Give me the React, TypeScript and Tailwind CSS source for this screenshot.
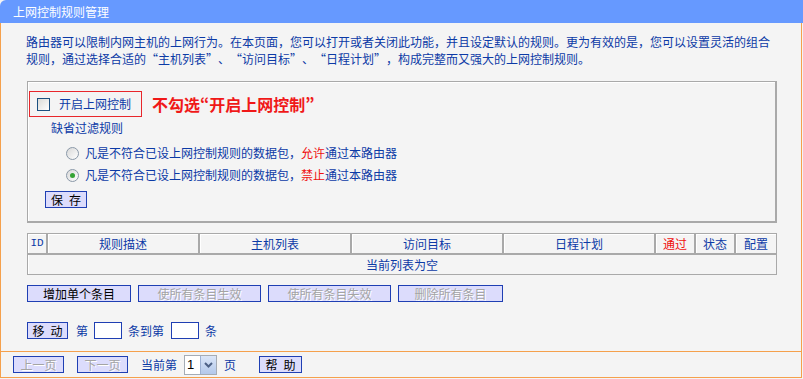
import React from "react";

const blue = "text-[#0c3aa6]";

function Btn({ label, w, disabled }: { label: string; w: string; disabled?: boolean }) {
  return (
    <div
      className={`${w} h-[17px] flex items-center justify-center bg-[#dcdcfc] border border-[#1f3fb3] text-[12px] leading-none whitespace-pre ${
        disabled ? "text-[#a4a4a4] [text-shadow:1px_1px_0_#fff]" : "text-black"
      }`}
    >
      {label}
    </div>
  );
}

function Radio({ checked }: { checked?: boolean }) {
  return (
    <span className="w-[13px] h-[13px] rounded-full border border-[#8a98a8] bg-gradient-to-br from-[#d8d8d8] to-white flex items-center justify-center">
      {checked && <span className="w-[5px] h-[5px] rounded-full bg-[#35a335]" />}
    </span>
  );
}

export default function App() {
  const headers: { t: string; w: string; red?: boolean }[] = [
    { t: "ID", w: "w-[20px]" },
    { t: "规则描述", w: "w-[152px]" },
    { t: "主机列表", w: "w-[152px]" },
    { t: "访问目标", w: "w-[152px]" },
    { t: "日程计划", w: "w-[152px]" },
    { t: "通过", w: "w-[40px]", red: true },
    { t: "状态", w: "w-[40px]" },
    { t: "配置", w: "w-[40px]" },
  ];

  return (
    <div className="w-[803px] h-[379px] bg-[#f4f4f4] font-['Noto_Sans_CJK_SC',sans-serif] text-[12px] overflow-hidden">
      {/* title bar */}
      <div className="h-[23px] bg-[#6699ff] rounded-tl-[6px] text-white text-[12px] pl-[13px] flex items-center">
        上网控制规则管理
      </div>

      <div className="w-[802px] h-[355px] border-x border-b border-[#f5a04c] flex flex-col">
        {/* main */}
        <div className="h-[329px] border-b border-[#f5a04c] pl-[25px] pt-[10px]">
          <p className={`${blue} leading-[17px] w-[750px] [text-spacing-trim:space-all] [font-feature-settings:'fwid']`}>
            路由器可以限制内网主机的上网行为。在本页面，您可以打开或者关闭此功能，并且设定默认的规则。更为有效的是，您可以设置灵活的组合规则，通过选择合适的“主机列表”、“访问目标”、“日程计划”，构成完整而又强大的上网控制规则。
          </p>

          {/* settings box */}
          <div className="mt-[14px] ml-[1px] w-[750px] h-[142px] border border-r-2 border-b-2 border-[#a9a9a9] shadow-[inset_1px_1px_0_#fff] pt-[9px] pl-[1px]">
            <div className="flex items-center">
              <div className="w-[113px] h-[26px] border border-[#e8262b] flex items-center pl-[7px]">
                <span className="w-[13px] h-[13px] border border-[#1c5180] bg-gradient-to-br from-[#dcdcd7] to-white" />
                <span className={`${blue} ml-[9px]`}>开启上网控制</span>
              </div>
              <span className="ml-[10px] text-[16px] font-bold text-[#f01818] leading-none [font-feature-settings:'pwid']">
                不勾选“开启上网控制”
              </span>
            </div>
            <div className={`${blue} h-[18px] mt-[2px] pl-[22px] flex items-center`}>缺省过滤规则</div>
            <div className={`${blue} h-[22px] mt-[5px] pl-[37px] flex items-center`}>
              <Radio />
              <span className="ml-[6px]">
                凡是不符合已设上网控制规则的数据包，<span className="text-[#f01010]">允许</span>通过本路由器
              </span>
            </div>
            <div className={`${blue} h-[22px] pl-[37px] flex items-center`}>
              <Radio checked />
              <span className="ml-[6px]">
                凡是不符合已设上网控制规则的数据包，<span className="text-[#f01010]">禁止</span>通过本路由器
              </span>
            </div>
            <div className="mt-[5px] pl-[16px]">
              <Btn label={"保\u2002存"} w="w-[42px]" />
            </div>
          </div>

          {/* rules table */}
          <div className="mt-[10px] ml-[1px] w-[750px] border border-[#a9a9a9] shadow-[inset_1px_1px_0_#fff]">
            <div className="flex h-[21px] border-b-2 border-[#a9a9a9]">
              {headers.map((h, i) => (
                <div
                  key={h.t}
                  className={`${h.w} ${i < headers.length - 1 ? "border-r-2 border-[#a9a9a9]" : ""} shadow-[inset_1px_0_0_#fff] flex items-center justify-center ${
                    h.red ? "text-[#f01010]" : blue
                  } ${h.t === "ID" ? "font-['Liberation_Mono',monospace] text-[11px]" : ""}`}
                >
                  {h.t}
                </div>
              ))}
            </div>
            <div className={`${blue} h-[19px] flex items-center justify-center`}>当前列表为空</div>
          </div>

          <div className="mt-[10px] ml-[1px] flex gap-[7px]">
            <Btn label="增加单个条目" w="w-[104px]" />
            <Btn label="使所有条目生效" w="w-[123px]" disabled />
            <Btn label="使所有条目失效" w="w-[123px]" disabled />
            <Btn label="删除所有条目" w="w-[105px]" disabled />
          </div>

          <div className={`${blue} mt-[20px] ml-[1px] flex items-center h-[17px]`}>
            <Btn label={"移\u2002动"} w="w-[41px]" />
            <span className="ml-[8px]">第</span>
            <span className="ml-[6px] w-[28px] h-[17px] bg-white border border-[#1f3fb3]" />
            <span className="ml-[6px]">条到第</span>
            <span className="ml-[7px] w-[28px] h-[17px] bg-white border border-[#1f3fb3]" />
            <span className="ml-[6px]">条</span>
          </div>
        </div>

        {/* bottom bar */}
        <div className={`${blue} flex items-center h-[25px] pl-[12px]`}>
          <Btn label="上一页" w="w-[51px]" disabled />
          <span className="ml-[13px]" />
          <Btn label="下一页" w="w-[51px]" disabled />
          <span className="ml-[13px]">当前第</span>
          <div className="ml-[7px] w-[33px] h-[20px] bg-white border border-[#a5acb5] flex">
            <span className="flex-1 pl-[2px] text-black font-['Liberation_Sans',sans-serif] text-[13px] leading-[18px]">1</span>
            <span className="w-[16px] h-[18px] bg-gradient-to-b from-[#dbe6f8] to-[#b3c8ea] border-l border-[#9db1d3] flex items-center justify-center">
              <svg width="9" height="6" viewBox="0 0 9 6">
                <path d="M1 1 L4.5 4.5 L8 1" fill="none" stroke="#4d6185" strokeWidth="2" />
              </svg>
            </span>
          </div>
          <span className="ml-[7px]">页</span>
          <span className="ml-[23px]" />
          <Btn label={"帮\u2002助"} w="w-[43px]" />
        </div>
      </div>
    </div>
  );
}
